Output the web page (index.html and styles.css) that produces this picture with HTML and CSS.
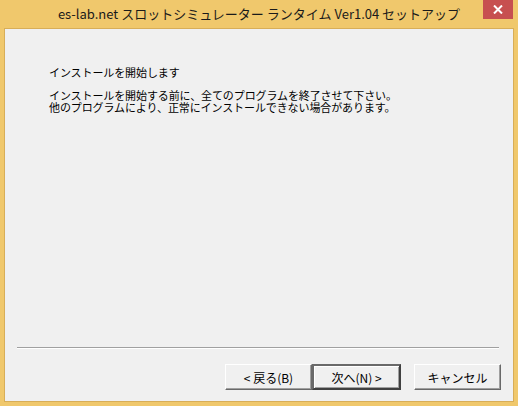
FILE: index.html
```html
<!DOCTYPE html>
<html lang="ja">
<head>
  <meta charset="UTF-8">
  <title>es-lab.net スロットシミュレーター ランタイム Ver1.04 セットアップ</title>
  <link rel="stylesheet" href="styles.css">
</head>
<body>
  <div class="ventana">
    <!-- Barra de título -->
    <div class="titulo">
      <span class="titulo-texto">es-lab.net スロットシミュレーター ランタイム Ver1.04 セットアップ</span>
      <div class="cerrar">
        <svg width="10" height="9" viewBox="0 0 10 9">
          <path d="M1 0.5 L9 8.5 M9 0.5 L1 8.5" stroke="#fff" stroke-width="2"/>
        </svg>
      </div>
    </div>
    <!-- Área de cliente -->
    <div class="cliente">
      <div class="contenido">
        <p class="encabezado">インストールを開始します</p>
        <p class="linea">インストールを開始する前に、全てのプログラムを終了させて下さい。</p>
        <p class="linea">他のプログラムにより、正常にインストールできない場合があります。</p>
      </div>
      <div class="separador"></div>
      <div class="botones">
        <button class="boton">&lt; 戻る(B)</button>
        <button class="boton predeterminado">次へ(N) &gt;</button>
        <button class="boton cancelar">キャンセル</button>
      </div>
    </div>
  </div>
</body>
</html>
```

FILE: styles.css
```css
* {
  margin: 0;
  padding: 0;
  box-sizing: border-box;
}
body {
  width: 518px;
  height: 406px;
  overflow: hidden;
  font-family: "Noto Sans CJK JP", "Liberation Sans", sans-serif;
  color: #000;
}
.ventana {
  width: 518px;
  height: 406px;
  background: #f0c86c;
  display: flex;
  flex-direction: column;
  padding: 0 4px 4px 4px;
}
/* Barra de título */
.titulo {
  height: 28px;
  flex: none;
  display: flex;
  align-items: center;
  justify-content: center;
  position: relative;
}
.titulo-texto {
  font-family: "Noto Sans CJK JP", "Open Sans", sans-serif;
  font-size: 13px;
  margin-top: -1px;
  color: #1a1a1a;
}
.cerrar {
  position: absolute;
  top: 0;
  right: 1px;
  width: 30px;
  height: 19px;
  background: #c75050;
  display: flex;
  align-items: center;
  justify-content: center;
}
/* Área de cliente */
.cliente {
  flex: 1;
  background: #f0f0f0;
  border: 1px solid #d8ae58;
  display: flex;
  flex-direction: column;
}
.contenido {
  flex: 1;
  padding: 37px 0 0 44px;
  font-size: 11px;
  line-height: 12px;
  letter-spacing: -0.1px;
}
.encabezado {
  margin-bottom: 11px;
}
.linea {
  height: 12px;
}
.separador {
  margin: 0 14px 0 12px;
  border-top: 1px solid #a0a0a0;
  border-bottom: 1px solid #fff;
}
.botones {
  display: flex;
  justify-content: flex-end;
  padding: 15px 12px 11px 0;
}
.boton {
  width: 87px;
  height: 26px;
  font-family: "Noto Sans CJK JP", "Liberation Sans", sans-serif;
  font-size: 12px;
  color: #000;
  background: #f0f0f0;
  border: 1px solid;
  border-color: #fff #696969 #696969 #fff;
  box-shadow: inset -1px -1px 0 #a0a0a0;
}
.predeterminado {
  width: 89px;
  border: 2px solid;
  border-color: #696969 #404040 #404040 #696969;
  box-shadow: inset 1px 1px 0 #fff, inset -1px -1px 0 #a0a0a0;
}
.cancelar {
  margin-left: 13px;
}
```
